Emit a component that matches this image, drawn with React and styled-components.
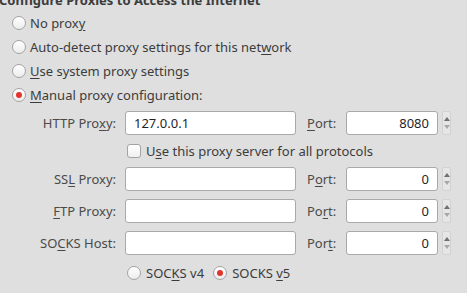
import React from "react";
import styled, { createGlobalStyle } from "styled-components";

const Global = createGlobalStyle`
  html, body { margin: 0; padding: 0; background: #dfdfdf; overflow: hidden; }
  body { font-family: "Noto Sans", "DejaVu Sans", sans-serif; font-size: 13px; color: #3c3c3c; }
`;

const Page = styled.div`
  width: 467px;
  height: 293px;
  overflow: hidden;
`;

const Inner = styled.div`
  margin-top: -9px;
  margin-left: -1px;
`;

const Header = styled.div`
  font-weight: bold;
  height: 18px;
  line-height: 18px;
  color: #3c3c3c;
`;

const RadioList = styled.div`
  display: flex;
  flex-direction: column;
  gap: 6px;
  padding-left: 13px;
  margin-top: 5px;
`;

const OptionRow = styled.label`
  display: flex;
  align-items: center;
  gap: 4px;
  height: 18px;
  white-space: nowrap;
`;

const Text = styled.span`
  white-space: nowrap;
`;

const RadioDot = styled.span`
  width: 14px;
  height: 14px;
  box-sizing: border-box;
  border-radius: 50%;
  border: 1px solid #a3a3a3;
  background: linear-gradient(#ffffff, #ececec);
  display: inline-flex;
  align-items: center;
  justify-content: center;
  flex: none;
  &::after {
    content: "";
    width: 6px;
    height: 6px;
    border-radius: 50%;
    background: ${(p) => (p.$on ? "#e1342a" : "transparent")};
  }
`;

const Check = styled.span`
  width: 14px;
  height: 14px;
  box-sizing: border-box;
  border-radius: 3px;
  border: 1px solid #a3a3a3;
  background: linear-gradient(#ffffff, #efefef);
  flex: none;
`;

const U = styled.span`
  text-decoration: underline;
  text-underline-offset: 2px;
`;

const Grid = styled.div`
  display: grid;
  grid-template-columns: 126px 171px 50px 92px 13px;
  row-gap: 8px;
  margin-top: 7px;
  align-items: center;
`;

const FieldLabel = styled.div`
  text-align: right;
  padding-right: 9px;
  color: #4a4a4a;
  white-space: nowrap;
`;

const PortLabel = styled.div`
  padding-left: 11px;
  color: #4a4a4a;
`;

const Input = styled.div`
  height: 24px;
  box-sizing: border-box;
  border: 1px solid #a9a9a9;
  border-radius: 3px;
  background: #fff;
  display: flex;
  align-items: center;
  justify-content: ${(p) => (p.$right ? "flex-end" : "flex-start")};
  padding: 0 8px;
  color: #1f1f2a;
  white-space: nowrap;
`;

const Spin = styled.div`
  height: 24px;
  width: 9px;
  margin-left: 4px;
  box-sizing: border-box;
  border: 1px solid #d2d2d2;
  border-radius: 2px;
  background: #e6e6e6;
  display: flex;
  flex-direction: column;
  align-items: center;
  justify-content: space-around;
  padding: 3px 0;
`;

const Tri = styled.span`
  width: 0;
  height: 0;
  border-left: 3px solid transparent;
  border-right: 3px solid transparent;
  ${(p) =>
    p.$down
      ? "border-top: 4px solid #a8a8a8;"
      : "border-bottom: 4px solid #707070;"}
`;

const SubRow = styled.div`
  grid-column: 2 / 6;
  display: flex;
  align-items: center;
  gap: 5px;
  height: 16px;
  padding-left: 2px;
`;

const SocksRow = styled.div`
  grid-column: 2 / 6;
  display: flex;
  align-items: center;
  gap: 9px;
  padding-left: 2px;
  height: 20px;
`;

const SocksOpt = styled.span`
  display: inline-flex;
  align-items: center;
  gap: 5px;
`;

const Spinner = () => (
  <Spin>
    <Tri />
    <Tri $down />
  </Spin>
);

const rows = [
  { label: <>HTTP Pro<U>x</U>y:</>, value: "127.0.0.1", port: <><U>P</U>ort:</>, pv: "8080" },
  { label: <>SS<U>L</U> Proxy:</>, value: "", port: <>P<U>o</U>rt:</>, pv: "0" },
  { label: <><U>F</U>TP Proxy:</>, value: "", port: <>Po<U>r</U>t:</>, pv: "0" },
  { label: <>SO<U>C</U>KS Host:</>, value: "", port: <>Por<U>t</U>:</>, pv: "0" },
];

export default function App() {
  return (
    <Page>
      <Global />
      <Inner>
        <Header>Configure Proxies to Access the Internet</Header>
        <RadioList>
          <OptionRow><RadioDot /><Text>No prox<U>y</U></Text></OptionRow>
          <OptionRow><RadioDot /><Text>Auto-detect proxy settings for this net<U>w</U>ork</Text></OptionRow>
          <OptionRow><RadioDot /><Text><U>U</U>se system proxy settings</Text></OptionRow>
          <OptionRow><RadioDot $on /><Text><U>M</U>anual proxy configuration:</Text></OptionRow>
        </RadioList>
        <Grid>
          {rows.map((r, i) => (
            <React.Fragment key={i}>
              <FieldLabel>{r.label}</FieldLabel>
              <Input>{r.value}</Input>
              <PortLabel>{r.port}</PortLabel>
              <Input $right>{r.pv}</Input>
              <Spinner />
              {i === 0 && (
                <SubRow>
                  <Check />
                  <Text>U<U>s</U>e this proxy server for all protocols</Text>
                </SubRow>
              )}
            </React.Fragment>
          ))}
          <FieldLabel />
          <SocksRow>
            <SocksOpt><RadioDot /><Text>SOC<U>K</U>S v4</Text></SocksOpt>
            <SocksOpt><RadioDot $on /><Text>SOCKS <U>v</U>5</Text></SocksOpt>
          </SocksRow>
          <FieldLabel>No Proxy for:</FieldLabel>
        </Grid>
      </Inner>
    </Page>
  );
}
